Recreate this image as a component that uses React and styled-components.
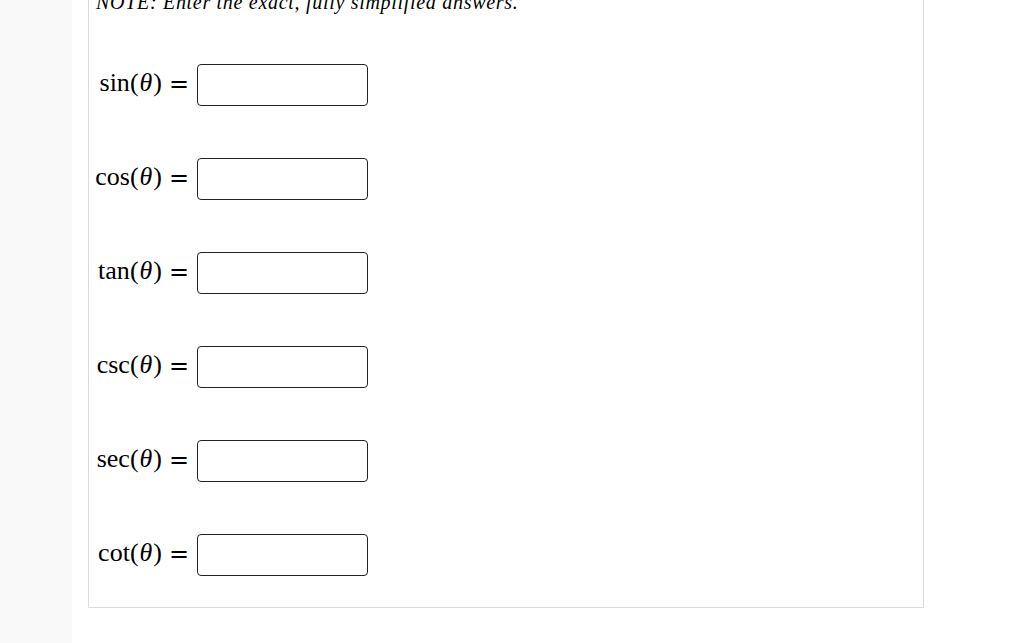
import React from "react";
import styled, { createGlobalStyle } from "styled-components";

const Global = createGlobalStyle`
  html, body { margin: 0; padding: 0; background: #ffffff; }
  body { font-family: "Liberation Serif", "DejaVu Serif", serif; color: #000; }
`;

const Page = styled.div`
  display: flex;
  width: 1024px;
  height: 643px;
  overflow: hidden;
`;

const Sidebar = styled.div`
  width: 72px;
  flex: none;
  background: #f9f9f9;
`;

const Main = styled.div`
  flex: 1;
  padding-left: 16px;
`;

const Panel = styled.div`
  width: 834px;
  margin-top: -30px;
  border: 1px solid #dcdcdc;
  border-top: none;
  padding: 0 0 31px 0;
`;

const Note = styled.p`
  margin: 0 0 0 7px;
  padding-top: 20px;
  font-style: italic;
  font-size: 20px;
  line-height: 24px;
  letter-spacing: 0.7px;
`;

const List = styled.div`
  display: flex;
  flex-direction: column;
  gap: 52px;
  margin-top: 50px;
`;

const Row = styled.div`
  display: flex;
  align-items: center;
  height: 42px;
`;

const Label = styled.span`
  width: 73px;
  text-align: right;
  font-size: 26px;
  line-height: 30px;
  margin-top: -4px;
  white-space: nowrap;
`;

const Theta = styled.i`
  font-style: italic;
  padding: 0 1px;
`;

const Eq = styled.span`
  font-family: "DejaVu Serif", serif;
  font-size: 24px;
  line-height: 30px;
  margin: -2px 8px 0 7px;
`;

const Input = styled.input`
  box-sizing: border-box;
  width: 171px;
  height: 42px;
  border: 1px solid #222;
  border-radius: 4px;
  background: #fff;
  padding: 0 6px;
  font-size: 18px;
  outline: none;
`;

const funcs = ["sin", "cos", "tan", "csc", "sec", "cot"];

export default function App() {
  return (
    <>
      <Global />
      <Page>
        <Sidebar />
        <Main>
          <Panel>
            <Note>NOTE: Enter the exact, fully simplified answers.</Note>
            <List>
              {funcs.map((f) => (
                <Row key={f}>
                  <Label>
                    {f}(<Theta>θ</Theta>)
                  </Label>
                  <Eq>=</Eq>
                  <Input type="text" aria-label={`${f}(θ)`} />
                </Row>
              ))}
            </List>
          </Panel>
        </Main>
      </Page>
    </>
  );
}
